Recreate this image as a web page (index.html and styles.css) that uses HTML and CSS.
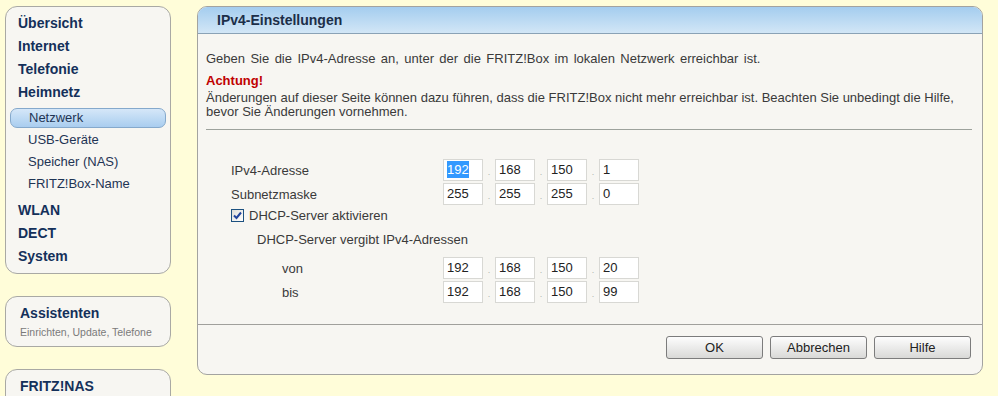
FILE: index.html
```html
<!DOCTYPE html>
<html lang="de">
<head>
  <meta charset="UTF-8" />
  <title>FRITZ!Box - IPv4-Einstellungen</title>
  <link rel="stylesheet" href="styles.css">
</head>
<body>
  <div class="sidebar">
    <div class="navbox">
      <div class="nav-main">Übersicht</div>
      <div class="nav-main">Internet</div>
      <div class="nav-main">Telefonie</div>
      <div class="nav-main">Heimnetz</div>
      <div class="nav-sub active">Netzwerk</div>
      <div class="nav-sub">USB-Geräte</div>
      <div class="nav-sub">Speicher (NAS)</div>
      <div class="nav-sub">FRITZ!Box-Name</div>
      <div class="nav-main gap">WLAN</div>
      <div class="nav-main">DECT</div>
      <div class="nav-main">System</div>
    </div>

    <div class="navbox small">
      <div class="box-title">Assistenten</div>
      <div class="box-sub">Einrichten, Update, Telefone</div>
    </div>

    <div class="navbox small">
      <div class="box-title">FRITZ!NAS</div>
    </div>
  </div>

  <div class="panel">
    <div class="panel-head">IPv4-Einstellungen</div>
    <div class="panel-body">
      <p class="intro">Geben Sie die IPv4-Adresse an, unter der die FRITZ!Box im lokalen Netzwerk erreichbar ist.</p>
      <div class="warn-title">Achtung!</div>
      <p class="warn">Änderungen auf dieser Seite können dazu führen, dass die FRITZ!Box nicht mehr erreichbar ist. Beachten Sie unbedingt die Hilfe, bevor Sie Änderungen vornehmen.</p>
      <hr class="sep">

      <div class="form">
        <div class="row">
          <div class="label">IPv4-Adresse</div>
          <div class="ip">
            <div class="octet"><span class="sel">192</span></div><span class="dot">.</span>
            <div class="octet">168</div><span class="dot">.</span>
            <div class="octet">150</div><span class="dot">.</span>
            <div class="octet">1</div>
          </div>
        </div>
        <div class="row">
          <div class="label">Subnetzmaske</div>
          <div class="ip">
            <div class="octet">255</div><span class="dot">.</span>
            <div class="octet">255</div><span class="dot">.</span>
            <div class="octet">255</div><span class="dot">.</span>
            <div class="octet">0</div>
          </div>
        </div>
        <div class="check-row">
          <span class="checkbox">
            <svg width="9" height="9" viewBox="0 0 9 9"><path d="M1 4.5 L3.5 7 L8 1.5" fill="none" stroke="#21449c" stroke-width="2"/></svg>
          </span>
          DHCP-Server aktivieren
        </div>
        <div class="dhcp-title">DHCP-Server vergibt IPv4-Adressen</div>
        <div class="row">
          <div class="label range">von</div>
          <div class="ip">
            <div class="octet">192</div><span class="dot">.</span>
            <div class="octet">168</div><span class="dot">.</span>
            <div class="octet">150</div><span class="dot">.</span>
            <div class="octet">20</div>
          </div>
        </div>
        <div class="row">
          <div class="label range">bis</div>
          <div class="ip">
            <div class="octet">192</div><span class="dot">.</span>
            <div class="octet">168</div><span class="dot">.</span>
            <div class="octet">150</div><span class="dot">.</span>
            <div class="octet">99</div>
          </div>
        </div>
      </div>
    </div>
    <div class="buttons">
      <button>OK</button>
      <button>Abbrechen</button>
      <button>Hilfe</button>
    </div>
  </div>
</body>
</html>
```

FILE: styles.css
```css
* {
  box-sizing: border-box;
}

html, body {
  height: 100%;
}

body {
  margin: 0;
  padding: 6px 15px 0 5px;
  background: #fffdd9;
  font-family: "Liberation Sans", Arial, sans-serif;
  font-size: 13px;
  color: #3a3a3a;
  display: flex;
  align-items: flex-start;
  gap: 26px;
  overflow: hidden;
}

/* left navigation */
.sidebar {
  width: 166px;
  flex-shrink: 0;
  display: flex;
  flex-direction: column;
  gap: 22px;
}

.navbox {
  background: #f7f6f2;
  border: 1px solid #a9a9a4;
  border-radius: 12px;
  padding: 5px 4px 5px 4px;
}

.nav-main {
  font-weight: bold;
  font-size: 14px;
  line-height: 23px;
  color: #14305a;
  padding-left: 8px;
}

.nav-main.gap {
  margin-top: 4px;
}

.nav-sub {
  font-size: 13px;
  line-height: 22px;
  color: #1e3454;
  padding-left: 18px;
}

.nav-sub.active {
  margin: 4px 0 1px;
  line-height: 18px;
  border: 1px solid #85a9cc;
  border-radius: 7px;
  background: linear-gradient(#d5e7f8, #a9cdef);
}

.navbox.small {
  padding: 7px 4px 8px 14px;
  height: 51px;
}

.box-title {
  font-weight: bold;
  font-size: 14px;
  line-height: 18px;
  color: #14305a;
}

.box-sub {
  font-size: 10.5px;
  line-height: 20px;
  color: #7a7a7a;
}

/* main panel */
.panel {
  flex: 1;
  background: #f7f6f2;
  border: 1px solid #a3a3a0;
  border-radius: 10px;
  overflow: hidden;
}

.panel-head {
  height: 27px;
  line-height: 26px;
  padding-left: 19px;
  font-weight: bold;
  font-size: 14px;
  color: #1c2e48;
  background: linear-gradient(#a4cdef, #d2e6f6);
  border-bottom: 1px solid #8aa2b6;
}

.panel-body {
  padding: 17px 10px 20px 8px;
  border-bottom: 1px solid #a0a09c;
}

.intro {
  margin: 0 0 7px;
  line-height: 15px;
  word-spacing: 1.8px;
}

.warn-title {
  color: #c00000;
  font-weight: bold;
  line-height: 15px;
  margin-bottom: 3px;
}

.warn {
  margin: 0;
  line-height: 14px;
}

.sep {
  border: 0;
  border-top: 1px solid #9da29c;
  margin: 10px 0 28px;
}

/* form */
.form {
  padding-left: 25px;
}

.row {
  display: flex;
  align-items: center;
  height: 24px;
}

.label {
  width: 212px;
}

.label.range {
  padding-left: 51px;
}

.ip {
  display: flex;
  align-items: center;
}

.octet {
  width: 40px;
  height: 22px;
  line-height: 20px;
  background: #fff;
  border: 1px solid #d8d8d4;
  padding-left: 3px;
  color: #222;
}

.sel {
  background: #3399ff;
  color: #fff;
  padding: 1px 0;
}

.dot {
  width: 12px;
  text-align: center;
  color: #b0b0b0;
  font-size: 9px;
  line-height: 22px;
  padding-top: 4px;
}

.check-row {
  display: flex;
  align-items: center;
  height: 18px;
}

.checkbox {
  width: 13px;
  height: 13px;
  border: 1px solid #1c5180;
  background: linear-gradient(135deg, #dcdcd7, #fff);
  margin-right: 5px;
  display: flex;
  align-items: center;
  justify-content: center;
}

.dhcp-title {
  padding-left: 26px;
  line-height: 20px;
  margin: 6px 0 6px;
}

/* buttons */
.buttons {
  display: flex;
  justify-content: flex-end;
  gap: 7px;
  padding: 11px 11px 15px;
}

button {
  width: 97px;
  height: 23px;
  font-family: "Liberation Sans", Arial, sans-serif;
  font-size: 13px;
  color: #222;
  background: linear-gradient(#fdfdfd, #d9d9d7);
  border: 1px solid #7c7c7c;
  border-radius: 3px;
  cursor: pointer;
}
```
